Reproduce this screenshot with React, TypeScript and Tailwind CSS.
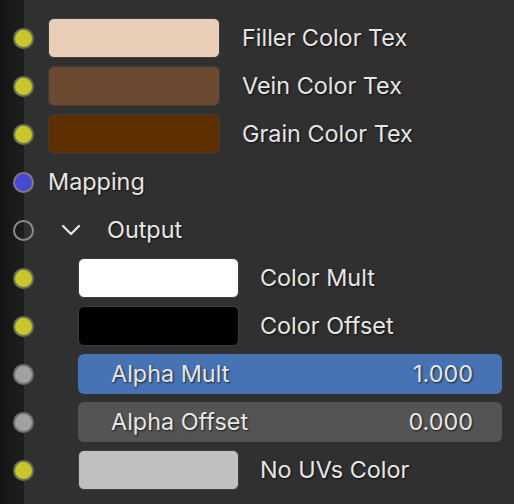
import React from 'react';

type SocketKind = 'color' | 'vector' | 'float' | 'empty';

const socketClass: Record<SocketKind, string> = {
    color: 'bg-[#c7c729] border-[#6e6e5a]',
    vector: 'bg-[#4848d2] border-[#7a7a8a]',
    float: 'bg-[#a1a1a1] border-[#6e6e6e]',
    empty: 'bg-transparent border-[#8c8c8c]',
};

const Socket: React.FC<{ kind: SocketKind }> = ({ kind }) => (
    <div className={`w-[21px] h-[21px] rounded-full border-2 shrink-0 ${socketClass[kind]}`} />
);

const label = 'text-[23.4px] leading-none text-[#e6e6e6] [text-shadow:1px_1px_2px_rgba(0,0,0,0.7)] whitespace-nowrap';

const ColorRow: React.FC<{ color: string; text: string; indent?: boolean }> = ({ color, text, indent }) => (
    <div className="h-12 flex items-center pl-[13px]">
        <Socket kind="color" />
        <div
            className={`h-10 rounded-md border border-[#3d3d3d] ${indent ? 'ml-[44px] w-[161px]' : 'ml-[14px] w-[172px]'}`}
            style={{ backgroundColor: color }}
        />
        <span className={`${label} ${indent ? 'ml-[21px]' : 'ml-[22px]'}`}>{text}</span>
    </div>
);

const ValueRow: React.FC<{ text: string; value: string; active?: boolean }> = ({ text, value, active }) => (
    <div className="h-12 flex items-center pl-[13px]">
        <Socket kind="float" />
        <div
            className={`ml-[44px] w-[424px] h-10 rounded-md flex items-center justify-between pl-[33px] pr-[29px] ${
                active ? 'bg-[#4772b3]' : 'bg-[#545454]'
            }`}
        >
            <span className={label}>{text}</span>
            <span className={label}>{value}</span>
        </div>
    </div>
);

export default function App() {
    return (
        <div
            className="w-[514px] h-[504px] overflow-hidden pt-[14px] bg-[linear-gradient(to_right,#151515_0px,#1e1e1e_24px,#303030_24px)]"
            style={{ fontFamily: 'Inter, "Noto Sans", sans-serif' }}
        >
            <ColorRow color="#eacfb8" text="Filler Color Tex" />
            <ColorRow color="#6b4a31" text="Vein Color Tex" />
            <ColorRow color="#5e2f00" text="Grain Color Tex" />

            {/* Mapping */}
            <div className="h-12 flex items-center pl-[13px]">
                <Socket kind="vector" />
                <span className={`${label} ml-[14px]`}>Mapping</span>
            </div>

            {/* Output panel header */}
            <div className="h-12 flex items-center pl-[13px]">
                <Socket kind="empty" />
                <svg className="ml-[27px] w-[20px] h-[14px]" viewBox="0 0 20 14" fill="none">
                    <path d="M2 3 L10 11 L18 3" stroke="#e8e8e8" strokeWidth="2.2" strokeLinecap="round" strokeLinejoin="round" />
                </svg>
                <span className={`${label} ml-[26px]`}>Output</span>
            </div>

            <ColorRow color="#ffffff" text="Color Mult" indent />
            <ColorRow color="#000000" text="Color Offset" indent />
            <ValueRow text="Alpha Mult" value="1.000" active />
            <ValueRow text="Alpha Offset" value="0.000" />
            <ColorRow color="#c0c0c0" text="No UVs Color" indent />
        </div>
    );
}
